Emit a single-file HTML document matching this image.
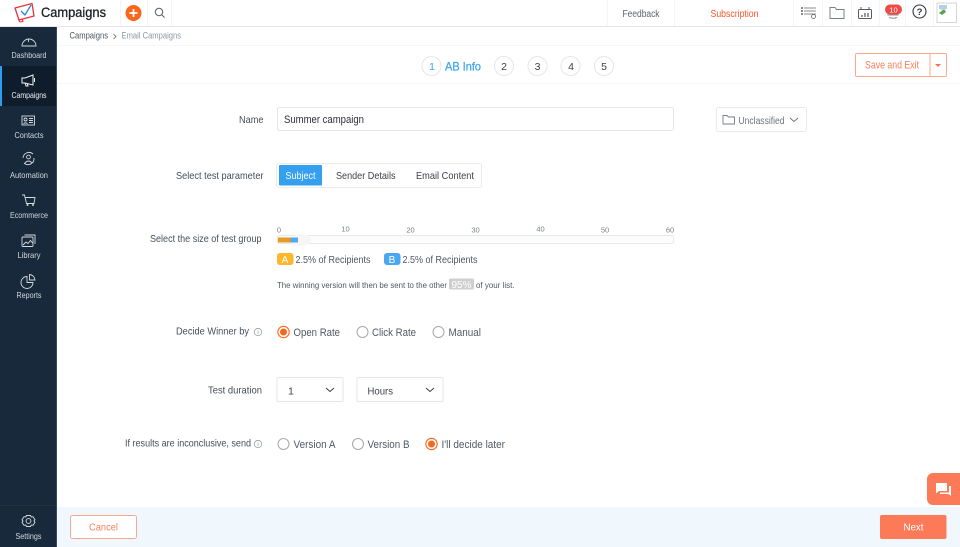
<!DOCTYPE html>
<html><head><meta charset="utf-8"><title>Campaigns</title>
<style>
html,body{margin:0;padding:0;background:#fff;width:960px;height:547px;overflow:hidden}
svg{display:block;font-family:"Liberation Sans",sans-serif}
text{white-space:pre}
.s{fill:#d2d9df;font-size:8.3px;text-anchor:middle}
.i{fill:none;stroke:#d3dae0;stroke-width:.9}
.l{fill:#454e5a;font-size:10.5px}
.t{fill:#79818a;font-size:7.5px}
.n{fill:#3d3f45;font-size:10.5px;text-anchor:middle}
.h{fill:none;stroke:#555c66;stroke-width:1}
.sep{fill:#f5f5f5}
</style></head><body>
<svg width="960" height="547" viewBox="0 0 960 547" xmlns="http://www.w3.org/2000/svg">
<rect width="960" height="547" fill="#fff"/>
<!-- top bar -->
<rect x="0" y="26" width="960" height="1" fill="#e6e6e6"/>
<g fill="none" stroke-linejoin="round">
<path d="M15 8 L32 3.500 L34 16 L19 20 Z" stroke="#e8333c" stroke-width="1.300"/>
<path d="M21 11 L25 15 L31 5" stroke="#2c86e0" stroke-width="1.300"/>
<path d="M18 19 L20 22 L23 21.500 L22 19" stroke="#e8333c" stroke-width="1.100"/>
</g>
<text x="41" y="17" font-size="13.500" fill="#1c2026" stroke="#1c2026" stroke-width=".3" textLength="65" lengthAdjust="spacingAndGlyphs">Campaigns</text>
<rect x="120" y="0" width="1" height="26" class="sep"/><rect x="147" y="0" width="1" height="26" class="sep"/><rect x="171" y="0" width="1" height="26" class="sep"/>
<circle cx="133.500" cy="13" r="8" fill="#f9671c"/>
<path d="M133.500 9v8M129.500 13h8" stroke="#fff" stroke-width="1.800" fill="none"/>
<circle cx="159" cy="12" r="3.700" class="h" stroke-width=".9"/><path d="M162 15l2.500 2.500" class="h"/>
<rect x="607" y="0" width="1" height="26" class="sep"/><rect x="674" y="0" width="1" height="26" class="sep"/><rect x="793" y="0" width="1" height="26" class="sep"/>
<rect x="822" y="0" width="1" height="26" class="sep"/><rect x="851" y="0" width="1" height="26" class="sep"/><rect x="879" y="0" width="1" height="26" class="sep"/><rect x="905" y="0" width="1" height="26" class="sep"/><rect x="933" y="0" width="1" height="26" class="sep"/>
<text x="622.500" y="17" font-size="9.800" fill="#5b6470" textLength="37" lengthAdjust="spacingAndGlyphs">Feedback</text>
<text x="710.500" y="17" font-size="9.800" fill="#f9562a" textLength="48" lengthAdjust="spacingAndGlyphs">Subscription</text>
<path d="M801 8h2M801 11h2M801 14h2" stroke="#444" stroke-width="1.200" fill="none"/>
<path d="M804 8h12M804 11h12M804 14h12" stroke="#666" stroke-width=".8" fill="none"/>
<circle cx="813.500" cy="16.500" r="2" fill="#fff" stroke="#666" stroke-width=".8"/>
<path d="M830 7.500h5l1.500 2h7.500v9h-14z" fill="none" stroke="#7a8088"/>
<rect x="858.500" y="9.500" width="13" height="9" rx="1" class="h"/>
<path d="M861 7v3M869 7v3" class="h"/>
<path d="M862 17v-2M865 17v-4M868 17v-4" stroke="#555" stroke-width="1.200"/>
<path d="M888 13v2h10v-2" fill="none" stroke="#8a929a"/>
<path d="M889 17.500q4 1.500 8 0" fill="none" stroke="#8a929a"/>
<rect x="885" y="4.500" width="17" height="10" rx="5" fill="#ef4b44"/>
<text x="893.500" y="12.500" font-size="7.500" fill="#fff" text-anchor="middle">10</text>
<circle cx="919.500" cy="11.500" r="6.500" fill="none" stroke="#33383e" stroke-width="1.100"/>
<text x="919.500" y="15" font-size="9.500" font-weight="700" fill="#33383e" text-anchor="middle">?</text>
<rect x="937" y="3" width="19.500" height="19.500" fill="#fff" stroke="#d6d6d6"/>
<path d="M939 13l5-4 2 3-4 3z" fill="#5aa34a"/><path d="M939 5h8v4l-4 1-4-1z" fill="#b8cfe6"/>
<!-- sidebar -->
<rect x="0" y="27" width="57" height="520" fill="#17293a"/>
<rect x="56" y="27" width="1" height="520" fill="#3a4a5a"/>
<rect x="0" y="66" width="56" height="40" fill="#0e1c2b"/>
<rect x="0" y="66" width="2" height="40" fill="#2e9df0"/>
<!-- Dashboard -->
<path class="i" d="M22 46a7 7 0 1 1 14 0z"/><path class="i" d="M28.500 39v3"/>
<text x="29" y="58" class="s" textLength="35" lengthAdjust="spacingAndGlyphs">Dashboard</text>
<!-- Campaigns -->
<path d="M22 78h3l8-3v10l-8-2h-3z" fill="none" stroke="#eef1f3" stroke-width="1"/><path d="M25 83l1 3h2l-1-3M34.500 78v4" stroke="#eef1f3" fill="none"/>
<text x="29" y="98" class="s" style="fill:#eef2f5" textLength="35" lengthAdjust="spacingAndGlyphs">Campaigns</text>
<!-- Contacts -->
<rect class="i" x="22" y="116" width="12.500" height="9"/><circle class="i" cx="25.500" cy="119.500" r="1.500"/><path class="i" d="M23.500 124q2-2.500 4 0M29 118.500h4M29 120.500h4M29 122.500h4"/>
<text x="29" y="138" class="s" textLength="29" lengthAdjust="spacingAndGlyphs">Contacts</text>
<!-- Automation -->
<circle class="i" cx="28.500" cy="157" r="1.900"/><path class="i" d="M25 163q3.500-4 7 0M23 158a6 6 0 0 1 10-4M34 158a6 6 0 0 1-10 5"/>
<text x="29" y="178" class="s" textLength="38" lengthAdjust="spacingAndGlyphs">Automation</text>
<!-- Ecommerce -->
<path class="i" d="M22 195h2.500l2 8.500h7.500l1-6h-10"/><circle cx="27.500" cy="205" r="1" fill="#d3dae0"/><circle cx="33" cy="205" r="1" fill="#d3dae0"/>
<text x="29" y="218" class="s" textLength="38" lengthAdjust="spacingAndGlyphs">Ecommerce</text>
<!-- Library -->
<rect class="i" x="22" y="237" width="11" height="9.500" rx="1"/><path class="i" d="M24.500 235h10.500v9M23 245l3-3 2 1.500 2.500-3 2.500 3"/>
<text x="29" y="258" class="s" textLength="23" lengthAdjust="spacingAndGlyphs">Library</text>
<!-- Reports -->
<path class="i" d="M27 276.500a6 6 0 1 0 6 6h-6z"/><path class="i" d="M29.500 274.500a6 6 0 0 1 5.500 5.500h-5.500z"/>
<text x="29" y="298" class="s" textLength="25" lengthAdjust="spacingAndGlyphs">Reports</text>
<!-- Settings -->
<circle class="i" cx="28.500" cy="521" r="2.400"/><path class="i" d="M26.500 515.500h4l.7 1.500 1.800-.3 2 3-1 1.300 1 1.300-2 3-1.800-.3-.7 1.500h-4l-.7-1.500-1.800.3-2-3 1-1.300-1-1.300 2-3 1.800.3z"/>
<text x="28.500" y="539" class="s" textLength="26" lengthAdjust="spacingAndGlyphs">Settings</text>
<rect x="0" y="505" width="56" height="1" fill="#20333f"/>
<!-- breadcrumb -->
<rect x="57" y="45" width="903" height="1" fill="#f7f7f7"/>
<rect x="57" y="83" width="903" height="1" fill="#f7f7f7"/>
<text x="69.500" y="38.500" font-size="8.800" fill="#4c5560" textLength="38.500" lengthAdjust="spacingAndGlyphs">Campaigns</text>
<path d="M113.500 34l2.500 2.500-2.500 2.500" fill="none" stroke="#666" stroke-width=".8"/>
<text x="121.500" y="38.500" font-size="8.800" fill="#8d98a4" textLength="59.500" lengthAdjust="spacingAndGlyphs">Email Campaigns</text>
<!-- steps -->
<g fill="#fff" stroke="#e6e6e6" stroke-width="1">
<circle cx="431.500" cy="66" r="9.500"/><circle cx="504" cy="66" r="9.500"/><circle cx="537.500" cy="66" r="9.500"/><circle cx="570.500" cy="66" r="9.500"/><circle cx="604" cy="66" r="9.500"/>
</g>
<text x="432" y="70" class="n" style="fill:#3ba4f2">1</text>
<text x="445" y="70.500" font-size="11.800" fill="#3ba4f2" stroke="#3ba4f2" stroke-width=".25" textLength="36" lengthAdjust="spacingAndGlyphs">AB Info</text>
<text x="504" y="70" class="n">2</text><text x="537.500" y="70" class="n">3</text><text x="571" y="70" class="n">4</text><text x="604" y="70" class="n">5</text>
<!-- save -->
<rect x="855.500" y="53.500" width="91" height="23" rx="1.500" fill="#fff" stroke="#fda893"/>
<rect x="929.500" y="53" width="1" height="23" fill="#fda893"/>
<text x="865" y="68.500" font-size="10.800" fill="#fb7d5c" textLength="54" lengthAdjust="spacingAndGlyphs">Save and Exit</text>
<path d="M935 64h6l-3 3z" fill="#f9704a"/>
<!-- name -->
<text x="239" y="123" class="l" textLength="24.500" lengthAdjust="spacingAndGlyphs">Name</text>
<rect x="277.500" y="107.500" width="396" height="23" rx="2" fill="#fff" stroke="#e6e6e6"/>
<text x="284" y="123" font-size="11" fill="#2b2f36" textLength="80" lengthAdjust="spacingAndGlyphs">Summer campaign</text>
<rect x="716.500" y="107.500" width="90" height="24" rx="2" fill="#fff" stroke="#e8eaee"/>
<path d="M723 115.500h4l1.500 1.500h6v7h-11.500z" fill="none" stroke="#777e86" stroke-width=".9"/>
<text x="738.500" y="124" font-size="10" fill="#6c747d" textLength="46" lengthAdjust="spacingAndGlyphs">Unclassified</text>
<path d="M790 118l4 3.500 4-3.500" fill="none" stroke="#6c747d" stroke-width=".9"/>
<!-- parameter -->
<text x="176" y="179" class="l" textLength="87.500" lengthAdjust="spacingAndGlyphs">Select test parameter</text>
<rect x="276.500" y="163.500" width="205" height="24" rx="2" fill="#fff" stroke="#ebebeb"/>
<rect x="279" y="165" width="43" height="20.500" rx="1" fill="#359ff0"/>
<text x="285.500" y="179" font-size="10.500" fill="#fff" textLength="30" lengthAdjust="spacingAndGlyphs">Subject</text>
<text x="336" y="179" font-size="10.500" fill="#3d4148" textLength="59.500" lengthAdjust="spacingAndGlyphs">Sender Details</text>
<text x="416" y="179" font-size="10.500" fill="#3d4148" textLength="58" lengthAdjust="spacingAndGlyphs">Email Content</text>
<!-- group -->
<text x="150" y="242" class="l" textLength="111.500" lengthAdjust="spacingAndGlyphs">Select the size of test group</text>
<text x="279" y="232.500" class="t" text-anchor="middle">0</text><text x="345.500" y="231.500" class="t" text-anchor="middle">10</text><text x="410.500" y="232.500" class="t" text-anchor="middle">20</text><text x="475.500" y="232.500" class="t" text-anchor="middle">30</text><text x="540.500" y="231.500" class="t" text-anchor="middle">40</text><text x="605" y="232.500" class="t" text-anchor="middle">50</text><text x="670" y="232.500" class="t" text-anchor="middle">60</text>
<rect x="277.500" y="235.500" width="396" height="8" rx="2" fill="#fcfcfc" stroke="#e8e8e8"/>
<ellipse cx="301" cy="240" rx="10" ry="6" fill="#f6f6f6"/>
<rect x="278" y="237.500" width="12" height="5" fill="#e99a26"/>
<rect x="291" y="237.500" width="7" height="5" fill="#53a9ee"/>
<rect x="290" y="237.500" width="1" height="5" fill="#b09a70"/>
<rect x="277" y="253" width="16.500" height="12" rx="3" fill="#fdb72a"/>
<text x="285" y="263" font-size="10" fill="#fff" text-anchor="middle">A</text>
<text x="295.500" y="263" font-size="10.500" fill="#4e5763" textLength="75" lengthAdjust="spacingAndGlyphs">2.5% of Recipients</text>
<rect x="384" y="253" width="16.500" height="12" rx="3" fill="#4aa7f0"/>
<text x="392" y="263" font-size="10" fill="#fff" text-anchor="middle">B</text>
<text x="402.500" y="263" font-size="10.500" fill="#4e5763" textLength="75" lengthAdjust="spacingAndGlyphs">2.5% of Recipients</text>
<text x="277" y="288" font-size="8.600" fill="#4e5763" textLength="170" lengthAdjust="spacingAndGlyphs">The winning version will then be sent to the other</text>
<rect x="449" y="278.500" width="25" height="11" rx="1.500" fill="#cfcfcf"/>
<text x="461.500" y="288" font-size="10" fill="#fff" text-anchor="middle" textLength="20" lengthAdjust="spacingAndGlyphs">95%</text>
<text x="476" y="288" font-size="8.600" fill="#4e5763" textLength="38.500" lengthAdjust="spacingAndGlyphs">of your list.</text>
<!-- winner -->
<text x="176" y="334.500" class="l" textLength="73" lengthAdjust="spacingAndGlyphs">Decide Winner by</text>
<circle cx="258" cy="332" r="3.700" fill="none" stroke="#9aa0a6" stroke-width=".8"/><path d="M258 331v3M258 329.800v.6" stroke="#9aa0a6" stroke-width=".7"/>
<circle cx="283.500" cy="332" r="5.700" fill="#fff" stroke="#f9671c" stroke-width="1.100"/><circle cx="283.500" cy="332" r="3.500" fill="#f9671c"/>
<text x="293.500" y="336" font-size="11" fill="#515a66" textLength="46.500" lengthAdjust="spacingAndGlyphs">Open Rate</text>
<circle cx="362.500" cy="332" r="5.500" fill="#fff" stroke="#a4a8ac"/>
<text x="372" y="336" font-size="11" fill="#515a66" textLength="44" lengthAdjust="spacingAndGlyphs">Click Rate</text>
<circle cx="438.500" cy="332" r="5.500" fill="#fff" stroke="#a4a8ac"/>
<text x="448.500" y="336" font-size="11" fill="#515a66" textLength="32.500" lengthAdjust="spacingAndGlyphs">Manual</text>
<!-- duration -->
<text x="208" y="393.500" class="l" textLength="54" lengthAdjust="spacingAndGlyphs">Test duration</text>
<rect x="277" y="377.500" width="66" height="24" rx="1.500" fill="#fff" stroke="#e6e6e6"/>
<text x="288" y="394.500" font-size="10.500" fill="#3d4148">1</text>
<path d="M326 388l4 3.500 4-3.500" fill="none" stroke="#3a3f46" stroke-width="1"/>
<rect x="357" y="377.500" width="86" height="24" rx="1.500" fill="#fff" stroke="#e6e6e6"/>
<text x="367.500" y="394.500" font-size="10.500" fill="#3d4148" textLength="25.500" lengthAdjust="spacingAndGlyphs">Hours</text>
<path d="M426 388l4 3.500 4-3.500" fill="none" stroke="#3a3f46" stroke-width="1"/>
<!-- inconclusive -->
<text x="125" y="446.500" class="l" textLength="126" lengthAdjust="spacingAndGlyphs">If results are inconclusive, send</text>
<circle cx="258" cy="444" r="3.700" fill="none" stroke="#9aa0a6" stroke-width=".8"/><path d="M258 443v3M258 441.800v.6" stroke="#9aa0a6" stroke-width=".7"/>
<circle cx="283.500" cy="444" r="5.500" fill="#fff" stroke="#a4a8ac"/>
<text x="293.500" y="448" font-size="11" fill="#515a66" textLength="42" lengthAdjust="spacingAndGlyphs">Version A</text>
<circle cx="358" cy="444" r="5.500" fill="#fff" stroke="#a4a8ac"/>
<text x="367.500" y="448" font-size="11" fill="#515a66" textLength="42" lengthAdjust="spacingAndGlyphs">Version B</text>
<circle cx="431.500" cy="444" r="5.700" fill="#fff" stroke="#f9671c" stroke-width="1.100"/><circle cx="431.500" cy="444" r="3.500" fill="#f9671c"/>
<text x="441.500" y="448" font-size="11" fill="#515a66" textLength="63.500" lengthAdjust="spacingAndGlyphs">I'll decide later</text>
<!-- footer -->
<rect x="57" y="507" width="903" height="40" fill="#f0f8fd"/>
<rect x="70.500" y="515.500" width="66" height="23" rx="2" fill="#fff" stroke="#fda893"/>
<text x="89" y="530.500" font-size="10.500" fill="#fb7d5c" textLength="29" lengthAdjust="spacingAndGlyphs">Cancel</text>
<rect x="880" y="515" width="66.500" height="24" rx="2" fill="#fc7a57"/>
<text x="903.500" y="530.500" font-size="10.500" fill="#fff" textLength="20" lengthAdjust="spacingAndGlyphs">Next</text>
<!-- chat -->
<path d="M960 473h-27a6 6 0 0 0-6 6v20a6 6 0 0 0 6 6h27z" fill="#fc7a57"/>
<path d="M936 483h11v8h-8l-3 2.500z" fill="#fff"/>
<path d="M949 486h2v10l-2.500-2h-8.500v-1.500h9z" fill="#fff"/>
</svg>
</body></html>
